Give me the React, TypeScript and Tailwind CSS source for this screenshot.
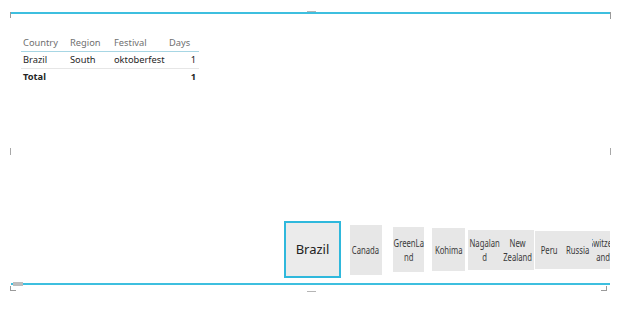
import React from 'react';

type Card = { lines: string[]; w: number; h: number; ml: number; back?: boolean };

const cards: Card[] = [
  { lines: ['Canada'], w: 32, h: 50, ml: 9 },
  { lines: ['GreenLa', 'nd'], w: 31, h: 45, ml: 11 },
  { lines: ['Kohima'], w: 33, h: 43, ml: 8 },
  { lines: ['Nagalan', 'd'], w: 33, h: 40, ml: 3 },
  { lines: ['New', 'Zealand'], w: 33, h: 40, ml: 0 },
  { lines: ['Peru'], w: 28, h: 38, ml: 1 },
  { lines: ['Russia'], w: 29, h: 38, ml: 0 },
  { lines: ['Switzerl', 'and'], w: 32, h: 38, ml: -5, back: true },
];

const rows = [
  { country: 'Brazil', region: 'South', festival: 'oktoberfest', days: '1' },
];

export default function App() {
  return (
    <div
      className="relative w-[638px] h-[316px] bg-white overflow-hidden pt-[12px] pl-[11px]"
      style={{ fontFamily: '"Noto Sans", "Open Sans", sans-serif' }}
    >
      <div className="relative w-[599px] h-[273px] border-t-2 border-b-2 border-[#3dbfdf]">
        {/* frame handles */}
        <div className="absolute -left-px -top-[2px] w-px h-[6px] bg-[#9a9a9a]" />
        <div className="absolute -right-px -top-[2px] w-px h-[7px] bg-[#9a9a9a]" />
        <div className="absolute left-[296px] -top-[3px] w-[9px] h-px bg-[#b5b5b5]" />
        <div className="absolute -left-px top-[134px] w-px h-[7px] bg-[#a8a8a8]" />
        <div className="absolute right-[-1px] top-[134px] w-px h-[7px] bg-[#a8a8a8]" />
        <div className="absolute left-[2px] -bottom-[3px] w-[10px] h-[4px] bg-[#bdbdbd]" />
        <div className="absolute -left-px -bottom-[8px] w-[6px] h-[5px] border-l border-b border-[#9a9a9a]" />
        <div className="absolute right-[3px] -bottom-[8px] w-[6px] h-[5px] border-r border-b border-[#9a9a9a]" />
        <div className="absolute left-[296px] -bottom-[9px] w-[9px] h-px bg-[#b5b5b5]" />

        <div className="flex flex-col h-full">
          <div className="pl-[10px] pt-[21px]">
            <table className="text-[9.3px] border-collapse">
              <thead>
                <tr className="border-b border-[#a7d6e4] text-[#6f6f6f]">
                  <th className="font-normal text-left w-[47px] pl-[2px] h-[16px]">Country</th>
                  <th className="font-normal text-left w-[44px] pl-[2px]">Region</th>
                  <th className="font-normal text-left w-[53px] pl-[2px]">Festival</th>
                  <th className="font-normal text-left w-[34px] pl-[4px]">Days</th>
                </tr>
              </thead>
              <tbody className="text-[#252525]">
                {rows.map((r) => (
                  <tr key={r.country} className="border-b border-[#e6e6e6]">
                    <td className="pl-[2px] h-[17px]">{r.country}</td>
                    <td className="pl-[2px]">{r.region}</td>
                    <td className="pl-[2px]">{r.festival}</td>
                    <td className="text-right pr-[3px]">{r.days}</td>
                  </tr>
                ))}
                <tr className="font-bold">
                  <td className="pl-[2px] h-[17px]">Total</td>
                  <td />
                  <td />
                  <td className="text-right pr-[3px]">1</td>
                </tr>
              </tbody>
            </table>
          </div>

          <div className="mt-auto pb-[5px] pl-[273px] flex items-center overflow-hidden">
            <div className="shrink-0 w-[57px] h-[57px] border-2 border-[#2fb8dc] bg-[#ebebeb] flex items-center justify-center text-[13px] text-[#222]">
              Brazil
            </div>
            {cards.map((c) => (
              <div
                key={c.lines.join('')}
                className={
                  'relative shrink-0 bg-[#e7e7e7] flex items-center justify-center overflow-hidden text-[11px] leading-[14px] text-[#3a3a3a] ' +
                  (c.back ? 'z-0' : 'z-10')
                }
                style={{ width: c.w, height: c.h, marginLeft: c.ml }}
              >
                <div className="flex flex-col items-center scale-x-[0.7] whitespace-nowrap">
                  {c.lines.map((l) => (
                    <span key={l}>{l}</span>
                  ))}
                </div>
              </div>
            ))}
          </div>
        </div>
      </div>
    </div>
  );
}
